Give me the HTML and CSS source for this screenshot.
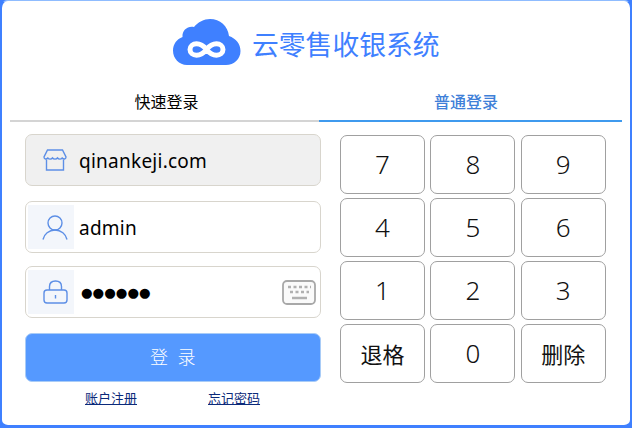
FILE: index.html
```html
<!DOCTYPE html>
<html lang="zh">
<head>
<meta charset="utf-8">
<title>云零售收银系统</title>
<link rel="stylesheet" href="styles.css">
</head>
<body>
<div class="card">
  <header class="brand">
    <svg class="logo" width="68" height="46" viewBox="0 0 68 46">
      <path fill="#3f80ff" d="M14 46C6 46 0 39.500 0 31.500C0 25 4 20 9.500 18C9 11 15 6.500 21 8C25 3 31 0 37 0C47 0 55 7 56 17C63 19.500 67.500 25 67.500 32C67.500 40 61 46 53 46Z"/>
      <path fill="none" stroke="#fff" stroke-width="5" d="M33.500 30.500C30 26 27 24.800 23.500 24.800C20 24.800 17 27 17 30.500C17 34 20 36.200 23.500 36.200C27 36.200 30 35 33.500 30.500C37 26 40 24.800 43.500 24.800C47 24.800 50 27 50 30.500C50 34 47 36.200 43.500 36.200C40 36.200 37 35 33.500 30.500Z"/>
    </svg>
    <h1 class="title">云零售收银系统</h1>
  </header>
  <nav class="tabs">
    <div class="tab">快速登录</div>
    <div class="tab tab-active">普通登录</div>
  </nav>
  <main class="panel">
    <section class="form">
      <div class="field field-shop">
        <span class="field-icon">
          <svg width="24" height="22" viewBox="0 0 24 22" fill="none" stroke="#5d8fe6" stroke-width="1.400">
            <path d="M4.500 1H19.500L23 8C23 10.500 20.500 10.500 19.200 9C18 10.500 15.500 10.500 14.500 9C13.500 10.500 10.500 10.500 9.500 9C8.500 10.500 6 10.500 4.800 9C3.500 10.500 1 10.500 1 8Z"/>
            <path d="M3.500 10.500V21H20.500V10.500"/>
          </svg>
        </span>
        <span class="field-text">qinankeji.com</span>
      </div>
      <div class="field">
        <span class="field-icon field-icon-tinted">
          <svg width="26" height="25" viewBox="0 0 26 25" fill="none" stroke="#5d8fe6" stroke-width="1.400">
            <circle cx="13" cy="8" r="7"/>
            <path d="M1 24.500C2 19 7 15 13 15C19 15 24 19 25 24.500"/>
          </svg>
        </span>
        <span class="field-text">admin</span>
      </div>
      <div class="field">
        <span class="field-icon field-icon-tinted">
          <svg width="25" height="24" viewBox="0 0 25 24" fill="none" stroke="#5d8fe6" stroke-width="1.400">
            <rect x="1" y="10" width="23" height="13" rx="3"/>
            <path d="M6.500 10V6.500C6.500 3 9 1 12.500 1C16 1 18.500 3 18.500 6.500V10"/>
            <path d="M12.500 15V18.500"/>
          </svg>
        </span>
        <span class="field-text field-dots">●●●●●●</span>
        <svg class="keyboard" width="34" height="25" viewBox="0 0 34 25">
          <rect x="1" y="1" width="32" height="23" rx="4" fill="#fafafa" stroke="#a8a8a8" stroke-width="1.800"/>
          <path stroke="#b0b0b0" stroke-width="2.500" stroke-dasharray="3 2.500" d="M6 7H29M8 12H27"/>
          <path stroke="#b0b0b0" stroke-width="2.500" d="M10 18H25"/>
        </svg>
      </div>
      <button class="submit" type="button">登 录</button>
      <div class="links">
        <a class="link" href="#">账户注册</a>
        <a class="link" href="#">忘记密码</a>
      </div>
    </section>
    <section class="keypad">
      <button class="key" type="button">7</button>
      <button class="key" type="button">8</button>
      <button class="key" type="button">9</button>
      <button class="key" type="button">4</button>
      <button class="key" type="button">5</button>
      <button class="key" type="button">6</button>
      <button class="key" type="button">1</button>
      <button class="key" type="button">2</button>
      <button class="key" type="button">3</button>
      <button class="key key-word" type="button">退格</button>
      <button class="key" type="button">0</button>
      <button class="key key-word" type="button">删除</button>
    </section>
  </main>
</div>
</body>
</html>
```
FILE: styles.css
```css
* {
  box-sizing: border-box;
}

html,
body {
  margin: 0;
  height: 100%;
  background: #3f80ff;
}

body {
  font-family: "Noto Sans", "Noto Sans CJK SC", sans-serif;
  color: #000;
}

.card {
  width: 632px;
  height: 428px;
  background: #fff;
  border-style: solid;
  border-color: #8fbcff #3f80ff #3f80ff #3f80ff;
  border-width: 1px 2px 3px 2px;
  border-radius: 8px;
  overflow: hidden;
  padding: 18px 8px 0;
}

.brand {
  display: flex;
  align-items: center;
  height: 46px;
  padding-left: 163px;
  gap: 11px;
}

.logo {
  flex: none;
}

.title {
  margin: 0;
  font-size: 26.800px;
  font-weight: 400;
  color: #3f80ff;
  line-height: 46px;
  padding-top: 5px;
  white-space: nowrap;
}

.tabs {
  display: flex;
  margin-top: 25px;
  height: 32px;
}

.tab {
  width: 309px;
  font-size: 16px;
  line-height: 22px;
  padding-top: 1px;
  padding-left: 4px;
  text-align: center;
  border-bottom: 2px solid #d4d4d4;
}

.tab-active {
  width: 303px;
  padding-left: 0;
  padding-right: 9px;
  color: #3f80d8;
  font-weight: 500;
  border-bottom-color: #3f9aee;
}

.panel {
  display: flex;
  padding: 12px 0 0 15px;
}

.form {
  width: 296px;
  display: flex;
  flex-direction: column;
}

.field {
  display: flex;
  align-items: center;
  height: 52px;
  margin-bottom: 13px;
  padding: 2px;
  border: 1px solid #d8d5cd;
  border-radius: 7px;
  background: #fff;
}

.field-shop {
  background: #f0f0f0;
  margin-bottom: 15px;
}

.field-icon {
  flex: none;
  width: 46px;
  height: 44px;
  padding-left: 8px;
  display: flex;
  align-items: center;
  justify-content: center;
}

.field-icon-tinted {
  background: #f3f6fb;
}

.field-text {
  margin-left: 5px;
  padding-top: 2px;
  font-size: 19px;
  letter-spacing: 0.250px;
  line-height: 44px;
}

.field-dots {
  margin-left: 7px;
  padding-top: 2px;
  font-family: "DejaVu Sans", sans-serif;
  font-size: 13.300px;
  letter-spacing: 0;
}

.keyboard {
  margin-left: auto;
  margin-right: 2px;
}

.submit {
  height: 49px;
  margin-top: 2px;
  border: 1px solid #a9ccf7;
  border-radius: 7px;
  background: #5599ff;
  color: #fff;
  font: inherit;
  font-size: 18px;
  font-weight: 300;
  letter-spacing: 2.500px;
  padding: 0 0 4px 2px;
}

.links {
  display: flex;
  padding: 7px 0 0 60px;
  gap: 71px;
}

.link {
  font-size: 13px;
  line-height: 18px;
  color: #0b2a7a;
}

.keypad {
  margin: 1px 0 0 19px;
  width: 266px;
  height: 248px;
  display: grid;
  grid-template-columns: 85px 85px 85px;
  grid-template-rows: repeat(4, 59px);
  column-gap: 5.400px;
  row-gap: 4px;
}

.key {
  border: 1px solid #a0a0a0;
  border-radius: 7px;
  background: #fff;
  color: #111;
  font: inherit;
  font-size: 26px;
  font-weight: 300;
  padding: 0 0 2px;
}

.key-word {
  font-size: 22px;
  font-weight: 400;
}
```
